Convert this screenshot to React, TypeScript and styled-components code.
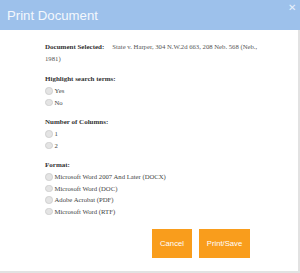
import React from "react";
import styled, { createGlobalStyle } from "styled-components";

const Global = createGlobalStyle`
  html, body { margin: 0; padding: 0; background: #fff; }
  #root { width: 300px; height: 273px; overflow: hidden; }
`;

const Dialog = styled.div`
  width: 300px;
  height: 273px;
  display: flex;
  flex-direction: column;
  box-sizing: border-box;
`;

const Header = styled.div`
  height: 30px;
  flex: none;
  background: #9dc1eb;
  display: flex;
  align-items: center;
  justify-content: space-between;
  padding: 0 4px 0 7px;
  box-sizing: border-box;
`;

const Title = styled.div`
  font-family: "Liberation Sans", Arial, sans-serif;
  font-size: 13.2px;
  color: #f4f8fd;
`;

const Close = styled.div`
  align-self: flex-start;
  margin-top: 2px;
  font-family: "Liberation Sans", Arial, sans-serif;
  font-size: 10px;
  color: #e8f0fb;
`;

const Body = styled.div`
  flex: 1;
  border-right: 2px solid #e2e2e2;
  border-bottom: 2px solid #e2e2e2;
  padding: 11px 46px 0 45px;
  font-family: "Liberation Serif", "Times New Roman", serif;
  font-size: 7px;
  color: #333;
  box-sizing: border-box;
`;

const DocRow = styled.div`
  display: flex;
  align-items: baseline;
  gap: 8px;
  line-height: 12px;
  white-space: nowrap;
`;

const Label = styled.span`
  font-weight: bold;
  color: #333;
`;

const Value = styled.span<{ $indent?: boolean }>`
  color: #555;
  font-size: 6.7px;
`;

const ValueCont = styled.div`
  color: #555;
  font-size: 6.7px;
  line-height: 12px;
`;

const Heading = styled.div`
  font-weight: bold;
  line-height: 12px;
  margin-top: 8px;
`;

const Option = styled.label`
  display: flex;
  align-items: center;
  height: 11.5px;
  font-size: 6.7px;
  color: #444;
`;

const Radio = styled.span`
  width: 5.5px;
  height: 5.5px;
  border-radius: 50%;
  background: #e4e4e4;
  border: 0.5px solid #d0d0d0;
  margin-right: 2px;
  flex: none;
`;

const Buttons = styled.div`
  display: flex;
  justify-content: flex-end;
  gap: 7px;
  margin-top: 11.5px;
  padding-right: 2px;
`;

const Button = styled.button<{ $w: number }>`
  width: ${(p) => p.$w}px;
  height: 29px;
  padding: 0;
  border: none;
  background: #f99d1c;
  color: #fff;
  font-family: "Liberation Sans", Arial, sans-serif;
  font-size: 7.7px;
`;

const Opt = ({ children }: { children: React.ReactNode }) => (
  <Option>
    <Radio />
    {children}
  </Option>
);

export default function App() {
  return (
    <>
      <Global />
      <Dialog>
        <Header>
          <Title>Print Document</Title>
          <Close>✕</Close>
        </Header>
        <Body>
          <DocRow>
            <Label>Document Selected:</Label>
            <Value>State v. Harper, 304 N.W.2d 663, 208 Neb. 568 (Neb.,</Value>
          </DocRow>
          <ValueCont>1981)</ValueCont>
          <Heading>Highlight search terms:</Heading>
          <Opt>Yes</Opt>
          <Opt>No</Opt>
          <Heading>Number of Columns:</Heading>
          <Opt>1</Opt>
          <Opt>2</Opt>
          <Heading>Format:</Heading>
          <Opt>Microsoft Word 2007 And Later (DOCX)</Opt>
          <Opt>Microsoft Word (DOC)</Opt>
          <Opt>Adobe Acrobat (PDF)</Opt>
          <Opt>Microsoft Word (RTF)</Opt>
          <Buttons>
            <Button $w={40}>Cancel</Button>
            <Button $w={51}>Print/Save</Button>
          </Buttons>
        </Body>
      </Dialog>
    </>
  );
}
